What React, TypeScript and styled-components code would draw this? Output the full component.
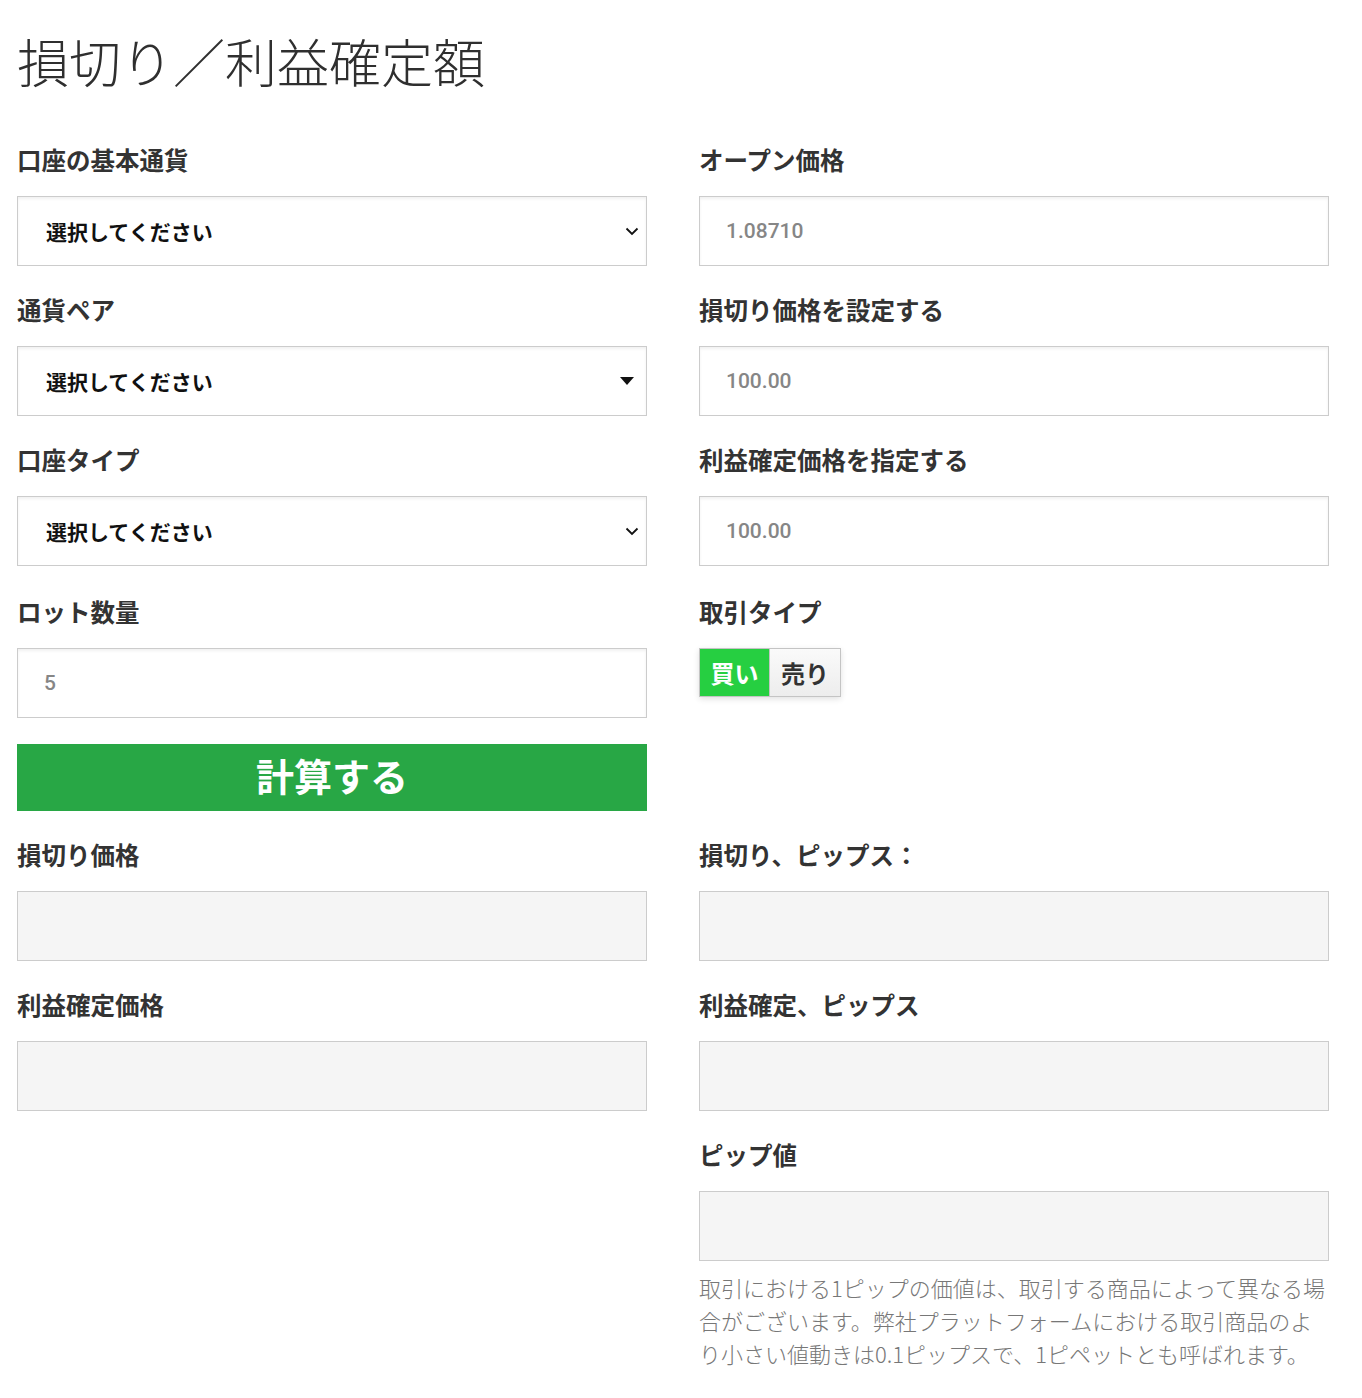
import React from "react";
import styled, { createGlobalStyle } from "styled-components";

const Global = createGlobalStyle`
  html, body { margin: 0; padding: 0; background: #fff; }
  body { font-family: "Noto Sans CJK JP", "Noto Sans", sans-serif; color: #333; }
  * { box-sizing: border-box; }
`;

const Page = styled.div`
  width: 1329px;
  padding: 30px 0 40px 17px;
`;

const Title = styled.h1`
  margin: 0;
  font-size: 52px;
  line-height: 62px;
  font-weight: 300;
  color: #2f2f2f;
  letter-spacing: 0;
`;

const Grid = styled.div`
  margin-top: 53px;
  display: grid;
  grid-template-columns: 630px 630px;
  column-gap: 52px;
  row-gap: 29px;
  align-items: start;
`;

const Field = styled.div`
  display: flex;
  flex-direction: column;
`;

const Label = styled.label`
  font-size: 24.5px;
  line-height: 30px;
  font-weight: 700;
  color: #333;
  margin-bottom: 21px;
`;

const SelectWrap = styled.div`
  position: relative;
  height: 70px;
`;

const Select = styled.select`
  appearance: none;
  -webkit-appearance: none;
  width: 100%;
  height: 70px;
  border: 1px solid #ccc;
  border-radius: 0;
  background: #fff;
  box-shadow: inset 0 2px 3px rgba(0, 0, 0, 0.06);
  padding: 0 50px 0 28px;
  font-family: "Noto Sans CJK JP", sans-serif;
  font-size: 21px;
  font-weight: 700;
  color: #111;
  outline: none;
`;

const Caret = styled.span<{ $offset: number }>`
  position: absolute;
  right: ${(p) => p.$offset}px;
  top: 50%;
  transform: translateY(-50%);
  width: 14px;
  height: 14px;
  display: flex;
  align-items: center;
  justify-content: center;
  pointer-events: none;
`;

const TextInput = styled.input<{ $output?: boolean }>`
  width: 100%;
  height: 70px;
  border: 1px solid #ccc;
  border-radius: 0;
  background: ${(p) => (p.$output ? "#f5f5f5" : "#fff")};
  box-shadow: ${(p) => (p.$output ? "none" : "inset 0 2px 3px rgba(0, 0, 0, 0.06)")};
  padding: 0 26px;
  font-family: Roboto, "Liberation Sans", sans-serif;
  font-size: 21px;
  font-weight: 500;
  color: #868686;
  outline: none;
`;

const LotField = styled(Field)`
  padding-top: 2px;
`;

const CalcButton = styled.button`
  margin-top: 26px;
  width: 100%;
  height: 67px;
  border: none;
  background: #28a745;
  color: #fff;
  font-family: "Noto Sans CJK JP", sans-serif;
  font-size: 38px;
  line-height: 1;
  font-weight: 700;
  cursor: pointer;
  padding: 0 0 6px;
`;

const Toggle = styled.div`
  display: flex;
  align-self: flex-start;
  box-shadow: 0 2px 6px rgba(0, 0, 0, 0.12);
`;

const ToggleBtn = styled.button<{ $active?: boolean }>`
  width: 71px;
  height: 49px;
  padding: 0;
  border: 1px solid #c4c4c4;
  border-left-width: ${(p) => (p.$active ? "1px" : "0")};
  background: ${(p) => (p.$active ? "#26cf41" : "linear-gradient(#fafafa, #ededed)")};
  color: ${(p) => (p.$active ? "#fff" : "#333")};
  font-family: "Noto Sans CJK JP", sans-serif;
  font-size: 24px;
  font-weight: 700;
  cursor: pointer;
`;

const Note = styled.p`
  margin: 10px 0 0;
  font-size: 22px;
  line-height: 33px;
  font-weight: 300;
  color: #777;
`;

const Chevron = () => (
  <svg width="14" height="9" viewBox="0 0 14 9">
    <path d="M1.5 1.5 L7 7 L12.5 1.5" fill="none" stroke="#111" strokeWidth="1.8" />
  </svg>
);

const Triangle = () => (
  <svg width="14" height="8" viewBox="0 0 14 8">
    <path d="M0 0 H14 L7 8 Z" fill="#111" />
  </svg>
);

const SelectField = ({ label, triangle }: { label: string; triangle?: boolean }) => (
  <Field>
    <Label>{label}</Label>
    <SelectWrap>
      <Select defaultValue="">
        <option value="">選択してください</option>
      </Select>
      <Caret $offset={triangle ? 13 : 8}>{triangle ? <Triangle /> : <Chevron />}</Caret>
    </SelectWrap>
  </Field>
);

const InputField = ({ label, value, output }: { label: string; value?: string; output?: boolean }) => (
  <Field>
    <Label>{label}</Label>
    <TextInput readOnly value={value ?? ""} $output={output} />
  </Field>
);

export default function App() {
  return (
    <Page>
      <Global />
      <Title>損切り／利益確定額</Title>
      <Grid>
        <SelectField label="口座の基本通貨" />
        <InputField label="オープン価格" value="1.08710" />

        <SelectField label="通貨ペア" triangle />
        <InputField label="損切り価格を設定する" value="100.00" />

        <SelectField label="口座タイプ" />
        <InputField label="利益確定価格を指定する" value="100.00" />

        <LotField>
          <Label>ロット数量</Label>
          <TextInput readOnly value="5" />
          <CalcButton>計算する</CalcButton>
        </LotField>
        <LotField>
          <Label>取引タイプ</Label>
          <Toggle>
            <ToggleBtn $active>買い</ToggleBtn>
            <ToggleBtn>売り</ToggleBtn>
          </Toggle>
        </LotField>

        <InputField label="損切り価格" output />
        <InputField label="損切り、ピップス：" output />

        <InputField label="利益確定価格" output />
        <InputField label="利益確定、ピップス" output />

        <div />
        <Field>
          <Label>ピップ値</Label>
          <TextInput readOnly value="" $output />
          <Note>
            取引における1ピップの価値は、取引する商品によって異なる場合がございます。弊社プラットフォームにおける取引商品のより小さい値動きは0.1ピップスで、1ピペットとも呼ばれます。
          </Note>
        </Field>
      </Grid>
    </Page>
  );
}
